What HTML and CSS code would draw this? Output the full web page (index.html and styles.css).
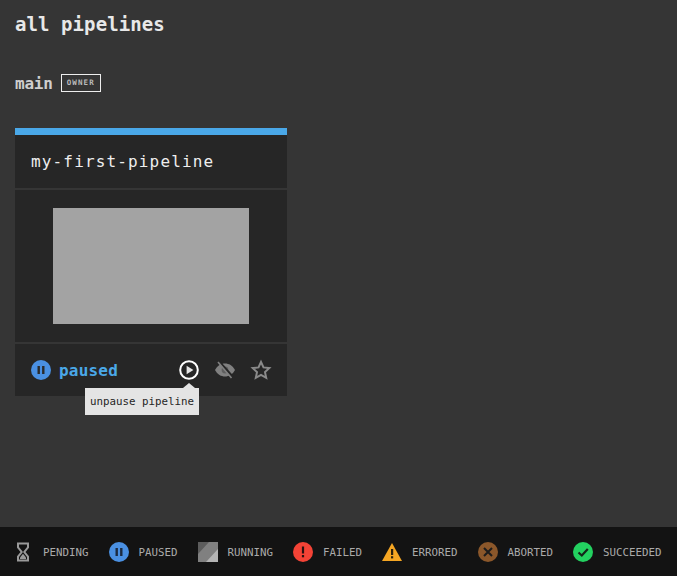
FILE: index.html
```html
<!DOCTYPE html>
<html lang="en">
<head>
<meta charset="utf-8"/>
<meta content="width=device-width, initial-scale=1.0" name="viewport"/>
<title>all pipelines</title>
<link rel="stylesheet" href="styles.css">
</head>
<body>
<main class="dashboard">
  <h1 class="page-title">all pipelines</h1>
  <div class="team-row">
    <h2 class="team-name">main</h2>
    <span class="team-role">owner</span>
  </div>
  <section class="card">
    <div class="card-bar"></div>
    <h3 class="card-name">my-first-pipeline</h3>
    <div class="card-body">
      <div class="preview"></div>
    </div>
    <div class="card-foot">
      <div class="status">
        <svg class="icon" width="20" height="20" viewBox="0 0 20 20">
          <circle cx="10" cy="10" r="10" fill="#4a90e2"/>
          <rect x="6.5" y="6" width="2.4" height="8" fill="#2a2a2a"/>
          <rect x="11.1" y="6" width="2.4" height="8" fill="#2a2a2a"/>
        </svg>
        <span class="status-label">paused</span>
      </div>
      <div class="actions">
        <svg class="icon action-play" width="20" height="20" viewBox="0 0 20 20">
          <circle cx="10" cy="10" r="8.8" fill="none" stroke="#fff" stroke-width="2"/>
          <path d="M7.6 5.8 14.4 10 7.6 14.2z" fill="#e6e6e6"/>
        </svg>
        <svg class="icon" width="22" height="20" viewBox="0 0 22 20">
          <path d="M1 10C3.5 5.500 7 3.500 11 3.500s7.500 2 10 6.500c-2.500 4.500-6 6.500-10 6.500S3.500 14.500 1 10z" fill="#808080"/>
          <circle cx="11" cy="10" r="3.400" fill="#5e5e5e"/>
          <path d="M5.500 2 19 17" stroke="#262626" stroke-width="2.400"/>
          <path d="M4 2 17.500 18" stroke="#808080" stroke-width="1.600"/>
        </svg>
        <svg class="icon" width="22" height="22" viewBox="0 0 22 22">
          <path d="M11 3 13.500 8.400 19.300 9.100 15 13.100 16.200 18.900 11 16 5.800 18.900 7 13.100 2.700 9.100 8.500 8.400z" fill="none" stroke="#8a8a8a" stroke-width="2" stroke-linejoin="miter"/>
        </svg>
        <div class="tooltip">unpause pipeline</div>
      </div>
    </div>
  </section>
</main>
<footer class="legend">
  <div class="legend-item">
    <svg class="icon legend-hourglass" width="14" height="20" viewBox="0 0 14 20">
      <path d="M2 1.500h10v3.800L8.300 10 12 14.700v3.800H2v-3.800L5.700 10 2 5.300z" fill="none" stroke="#9a9a9a" stroke-width="2"/>
      <path d="M4 17h6v-1.600L7 11.800 4 15.400z" fill="#9a9a9a"/>
    </svg>
    <span>pending</span>
  </div>
  <div class="legend-item">
    <svg class="icon" width="20" height="20" viewBox="0 0 20 20">
      <circle cx="10" cy="10" r="10" fill="#4a90e2"/>
      <rect x="6.500" y="6" width="2.400" height="8" fill="#1b2a40"/>
      <rect x="11.100" y="6" width="2.400" height="8" fill="#1b2a40"/>
    </svg>
    <span>paused</span>
  </div>
  <div class="legend-item">
    <svg class="icon" width="20" height="20" viewBox="0 0 20 20">
      <rect width="20" height="20" fill="#808080"/>
      <path d="M0 0h11L0 12z" fill="#5c5c5c"/>
      <path d="M20 7v13H8z" fill="#b4b4b4"/>
    </svg>
    <span>running</span>
  </div>
  <div class="legend-item">
    <svg class="icon" width="20" height="20" viewBox="0 0 20 20">
      <circle cx="10" cy="10" r="10" fill="#f44336"/>
      <rect x="8.900" y="4.500" width="2.200" height="7" fill="#2a1210"/>
      <rect x="8.900" y="13" width="2.200" height="2.300" fill="#2a1210"/>
    </svg>
    <span>failed</span>
  </div>
  <div class="legend-item">
    <svg class="icon" width="20" height="20" viewBox="0 0 20 20">
      <path d="M10 1 20 19H0z" fill="#f5a623"/>
      <rect x="9" y="7" width="2.200" height="6" fill="#2a1f0c"/>
      <rect x="9" y="14.200" width="2.200" height="2.200" fill="#2a1f0c"/>
    </svg>
    <span>errored</span>
  </div>
  <div class="legend-item">
    <svg class="icon" width="20" height="20" viewBox="0 0 20 20">
      <circle cx="10" cy="10" r="10" fill="#8b572a"/>
      <path d="M6 6 14 14M14 6 6 14" stroke="#1c1c1c" stroke-width="2"/>
    </svg>
    <span>aborted</span>
  </div>
  <div class="legend-item">
    <svg class="icon" width="20" height="20" viewBox="0 0 20 20">
      <circle cx="10" cy="10" r="10" fill="#23d160"/>
      <path d="M5.500 10.500 8.800 13.500 14.800 7" fill="none" stroke="#14261a" stroke-width="2.200"/>
    </svg>
    <span>succeeded</span>
  </div>
</footer>
</body>
</html>
```

FILE: styles.css
```css
* {
  box-sizing: border-box;
}

body {
  margin: 0;
  height: 576px;
  display: flex;
  flex-direction: column;
  background: #353535;
  color: #eee;
  font-family: "DejaVu Sans Mono", "Liberation Mono", monospace;
  overflow: hidden;
}

.dashboard {
  flex: 1;
  padding: 13px 15px 0;
}

.icon {
  display: block;
  flex: none;
}

.page-title {
  margin: 0;
  font-size: 19px;
  line-height: 22px;
  font-weight: 700;
  letter-spacing: 0.08px;
  color: #e8e8e8;
}

.team-row {
  display: flex;
  align-items: center;
  gap: 8px;
  margin-top: 39px;
  height: 18px;
}

.team-name {
  margin: 0;
  font-size: 16px;
  font-weight: 700;
  letter-spacing: -0.2px;
  color: #cfcfcf;
}

.team-role {
  border: 1px solid #eee;
  width: 40px;
  height: 18px;
  text-align: center;
  font-size: 7.500px;
  font-weight: 700;
  line-height: 16px;
  letter-spacing: 1.100px;
  text-transform: uppercase;
  color: #bbb;
}

.card {
  width: 272px;
  margin-top: 36px;
  background: #262626;
}

.card-bar {
  height: 7px;
  background: #4aa8e8;
}

.card-name {
  margin: 0;
  height: 53px;
  padding: 0 16px;
  font-size: 16px;
  line-height: 53px;
  font-weight: 400;
  letter-spacing: 1.150px;
  color: #eee;
}

.card-body {
  border-top: 2px solid #353535;
  border-bottom: 2px solid #353535;
  padding: 18px 38px;
  height: 156px;
}

.preview {
  height: 116px;
  background: #a3a3a3;
}

.card-foot {
  display: flex;
  align-items: center;
  justify-content: space-between;
  height: 52px;
  padding: 0 15px 0 16px;
}

.status {
  display: flex;
  align-items: center;
  gap: 8px;
}

.status-label {
  font-size: 16px;
  font-weight: 700;
  letter-spacing: 0.2px;
  color: #4aa8e8;
}

.actions {
  position: relative;
  display: flex;
  align-items: center;
  gap: 14px;
}

.action-play {
  margin-right: 1px;
}

.tooltip {
  position: absolute;
  top: 29px;
  left: -94px;
  width: 114px;
  height: 27px;
  background: #e4e4e4;
  color: #262626;
  font-size: 10.800px;
  line-height: 27px;
  text-align: center;
}

.tooltip::before {
  content: "";
  position: absolute;
  top: -5px;
  right: 4px;
  border-left: 6px solid transparent;
  border-right: 6px solid transparent;
  border-bottom: 5px solid #e4e4e4;
}

.legend {
  display: flex;
  align-items: center;
  gap: 20px;
  height: 49px;
  padding: 1px 0 0 16px;
  background: #131313;
}

.legend-item {
  display: flex;
  align-items: center;
  gap: 10px;
  font-size: 10.800px;
  text-transform: uppercase;
  color: #aaa;
}

.legend-hourglass {
  margin-right: 3px;
}
```
